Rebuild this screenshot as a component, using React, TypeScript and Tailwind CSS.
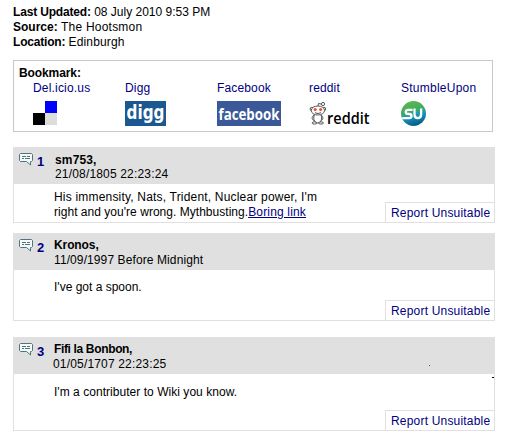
import React from "react";

const link = "text-[#000080]";

function CommentIcon() {
  return (
    <svg width="15" height="14" viewBox="0 0 15 14" className="block">
      <path d="M1.500 .5h11l1 1v6l-1 1H11.500v3.500L7.500 8.500H1.500l-1-1v-6z" fill="#f4f8f8" stroke="#50757e" />
      <path d="M3 3.500h4M8 3.500h3M3 5.500h2M6 5.500h5" stroke="#50757e" />
    </svg>
  );
}

type Entry = {
  n: number;
  name: string;
  date: string;
  body: React.ReactNode;
  box: string;
  head: string;
  nameCls: string;
  dateCls: string;
  bodyCls: string;
};

const entries: Entry[] = [
  {
    n: 1, name: "sm753,", date: "21/08/1805 22:23:24",
    body: (
      <>
        <div className="tracking-[0.19px]">His immensity, Nats, Trident, Nuclear power, I'm</div>
        <div>
          <span className="tracking-[0.03px]">right and you're wrong. Mythbusting.</span>
          <a className={link + " tracking-[0.17px] underline"}>Boring link</a>
        </div>
      </>
    ),
    box: "mt-[15px] h-[76px]", head: "pt-[6px] pl-[42px]", nameCls: "h-[14px] tracking-[0.15px]", dateCls: "tracking-[0.17px]", bodyCls: "pt-[6px]",
  },
  {
    n: 2, name: "Kronos,", date: "11/09/1997 Before Midnight", body: <div>I've got a spoon.</div>,
    box: "mt-[10px] h-[88px]", head: "pt-[5px] pl-[41px]", nameCls: "h-[15px] tracking-[-0.1px]", dateCls: "tracking-[0.1px]", bodyCls: "pt-[10px]",
  },
  {
    n: 3, name: "Fifi la Bonbon,", date: "01/05/1707 22:23:25",
    body: <div className="tracking-[0.04px]">I'm a contributer to Wiki you know.</div>,
    box: "mt-[16px] h-[94px]", head: "pt-[5px] pl-[41px]", nameCls: "h-[15px] tracking-[-0.35px]", dateCls: "-ml-px tracking-[0.17px]", bodyCls: "pt-[11px]",
  },
];

function Comment({ e }: { e: Entry }) {
  return (
    <section className={"relative flex w-[482px] flex-col border border-[#e0e0e0] " + e.box}>
      <header className={"relative -mx-px -mt-px h-[37px] shrink-0 bg-[#e0e0e0] " + e.head}>
        <div className="absolute top-[6px] left-[6px] flex">
          <CommentIcon />
          <b className="ml-[3px] text-[13px] leading-[17px] text-[#000080]">{e.n}</b>
        </div>
        <div className={"font-bold " + e.nameCls}>{e.name}</div>
        <div className={e.dateCls}>{e.date}</div>
        {e.n === 3 && <i className="absolute top-[28px] left-[416px] size-px bg-[#555]" />}
      </header>
      <div className={"pl-[40px] " + e.bodyCls}>{e.body}</div>
      <a className={"absolute -right-px -bottom-px h-[21px] w-[110px] border border-[#e0e0e0] pt-[3px] pl-[5px] tracking-[0.19px] " + link}>Report Unsuitable</a>
      {e.n === 3 && <i className="absolute top-[39px] right-0 h-px w-[2px] bg-black" />}
    </section>
  );
}

function Delicious() {
  return (
    <div className="grid size-[24px] grid-cols-2">
      <i />
      <i className="bg-[#0000ff]" />
      <i className="bg-black" />
      <i className="bg-[#dcdcdc]" />
    </div>
  );
}

function Digg() {
  return (
    <svg width="41" height="25" className="block overflow-visible">
      <rect width="41" height="25" fill="#1b5891" />
      <text x="1.500" y="17.500" textLength="38" lengthAdjust="spacingAndGlyphs" fill="#fff" fontFamily="DejaVu Sans" fontWeight="700" fontSize="19.500">digg</text>
    </svg>
  );
}

function Facebook() {
  return (
    <svg width="64" height="25" className="block overflow-visible">
      <rect width="64" height="25" fill="#3b5998" />
      <text x="1.500" y="19" textLength="61" lengthAdjust="spacingAndGlyphs" fill="#fff" fontFamily="Open Sans" fontWeight="700" fontSize="16.500">facebook</text>
    </svg>
  );
}

function Reddit() {
  return (
    <svg width="64" height="26" className="block overflow-visible">
      <g fill="#fff" stroke="#555" strokeWidth="1">
        <path d="M8.500 6.500l1-4 4 .8" fill="none" />
        <circle cx="14" cy="3" r="1.600" />
        <circle cx="2.800" cy="8" r="1.700" />
        <circle cx="15" cy="8" r="1.700" />
        <path d="M5 14c-3 2-2 5 .5 6M12 14c3 2 2 5-.5 6" fill="none" />
        <ellipse cx="8.700" cy="17" rx="4" ry="5" />
        <ellipse cx="5.500" cy="22" rx="2.500" ry="1.100" />
        <ellipse cx="12" cy="22" rx="2.500" ry="1.100" />
        <ellipse cx="8.900" cy="9.500" rx="6.700" ry="4.500" />
        <path d="M6 11.700q3 1.700 6 0" fill="none" />
      </g>
      <circle cx="6.200" cy="8.500" r="1.500" fill="#f04a25" />
      <circle cx="11.600" cy="8.500" r="1.500" fill="#f04a25" />
      <text x="18" y="22.500" textLength="42.500" lengthAdjust="spacingAndGlyphs" fill="#000" fontFamily="Open Sans" fontWeight="600" fontSize="17">reddit</text>
    </svg>
  );
}

function Stumble() {
  return (
    <svg width="26" height="26" className="block">
      <defs>
        <linearGradient id="su" x1=".35" y1="0" x2=".65" y2="1">
          <stop offset="0" stopColor="#5cb947" />
          <stop offset=".42" stopColor="#3fa869" />
          <stop offset=".58" stopColor="#1798c0" />
          <stop offset="1" stopColor="#07557f" />
        </linearGradient>
      </defs>
      <circle cx="12.500" cy="12.500" r="12.500" fill="url(#su)" />
      <path d="M11.500 8.800H7.400q-2.600 0-2.600 2.100t2.600 2.100h.8q2.300 0 2.300 2.100t-2.300 2.100H1.200M13.500 7.600v6q0 3.600 3.300 3.600t3.300-3.600V7.600" fill="none" stroke="#fff" strokeWidth="2.300" />
    </svg>
  );
}

const marks: [string, React.ReactNode, string, string][] = [
  ["Del.icio.us", <Delicious />, "w-[92px]", "tracking-[0.18px]"],
  ["Digg", <Digg />, "w-[92px]", "tracking-[0.2px]"],
  ["Facebook", <Facebook />, "w-[92px]", "tracking-[0.15px]"],
  ["reddit", <Reddit />, "w-[92px]", "tracking-[0.15px]"],
  ["StumbleUpon", <Stumble />, "w-[84px]", "tracking-[0.25px]"],
];

export default function App() {
  return (
    <main className="h-[437px] w-[505px] overflow-hidden bg-white pt-[5px] pl-[13px] font-['Liberation_Sans',Arial,sans-serif] text-[12px] leading-[15px] whitespace-nowrap text-black">
      <div><b className="tracking-[-0.17px]">Last Updated:</b> 08 July 2010 9:53 PM</div>
      <div><b>Source:</b> <span className="tracking-[0.22px]">The Hootsmon</span></div>
      <div><b className="tracking-[-0.2px]">Location:</b> <span className="tracking-[0.15px]">Edinburgh</span></div>
      <section className="mt-[10px] h-[72px] w-[480px] border border-[#c8c8c8] pt-[5px]">
        <div className="pl-[5px] font-bold tracking-[-0.1px]">Bookmark:</div>
        <div className="flex pl-[19px]">
          {marks.map(([t, icon, w, track]) => (
            <div key={t} className={"shrink-0 " + w}>
              <a className={"block h-[20px] " + link + " " + track}>{t}</a>
              {icon}
            </div>
          ))}
        </div>
      </section>
      {entries.map((e) => <Comment key={e.n} e={e} />)}
    </main>
  );
}
